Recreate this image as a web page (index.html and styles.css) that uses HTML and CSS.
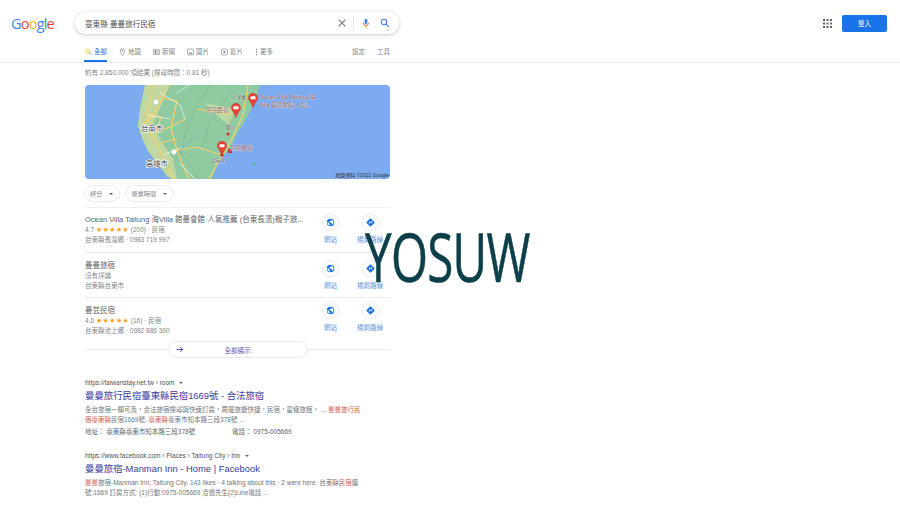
FILE: index.html
```html
<!DOCTYPE html>
<html lang="zh-Hant">
<head>
    <meta charset="UTF-8">
    <title>臺東縣 曼曼旅行民宿 - Google 搜尋</title>
    <link rel="stylesheet" href="styles.css">
</head>
<body>
    <svg class="defs" width="0" height="0">
        <symbol id="globe" viewBox="0 0 24 24"><path fill="#1a73e8" d="M12 2a10 10 0 1 0 0 20 10 10 0 0 0 0-20zM4 12c0-.6.1-1.200.2-1.800L9 15v1c0 1.100.9 2 2 2v2a8 8 0 0 1-7-8zm13.900 5.400c-.3-.8-1-1.400-1.900-1.400h-1v-3c0-.6-.4-1-1-1H8v-2h2c.6 0 1-.4 1-1V7h2c1.100 0 2-.9 2-2v-.4a8 8 0 0 1 2.900 12.800z"/></symbol>
        <symbol id="route" viewBox="0 0 24 24"><path fill="#1a73e8" d="M22.400 10.900 13.100 1.600a1.500 1.500 0 0 0-2.200 0l-9.300 9.300a1.500 1.500 0 0 0 0 2.200l9.300 9.300c.6.600 1.600.6 2.200 0l9.300-9.300c.6-.6.600-1.600 0-2.200z"/><path fill="#fff" d="M13.500 7.500V10H9c-.6 0-1 .4-1 1v4h2v-3h3.500v2.500L17 11z"/></symbol>
        <symbol id="pin" viewBox="0 0 16 24"><path fill="#ea4335" stroke="#b3261e" stroke-width=".6" d="M8 .5C3.900.5.700 3.700.700 7.700c0 5.300 5.400 7.700 7.300 15.800 1.900-8.100 7.300-10.500 7.300-15.800C15.300 3.700 12.100.5 8 .5z"/><rect x="4" y="5" width="8" height="5" rx="1" fill="#fff"/></symbol>
    </svg>

    <header class="topbar">
        <div class="logo"><span class="g-blue">G</span><span class="g-red">o</span><span class="g-yellow">o</span><span class="g-blue">g</span><span class="g-green">l</span><span class="g-red">e</span></div>
        <div class="searchbox">
            <span class="query">臺東縣 曼曼旅行民宿</span>
            <svg class="clear" viewBox="0 0 12 12"><path d="M2 2l8 8M10 2l-8 8" stroke="#70757a" stroke-width="1.300"/></svg>
            <span class="sep"></span>
            <svg class="mic" viewBox="0 0 12 16"><rect x="4" y="1" width="4" height="8" rx="2" fill="#4285f4"/><path d="M2 7c0 2.500 1.800 4 4 4s4-1.500 4-4" fill="none" stroke="#ea4335" stroke-width="1.300"/><path d="M6 11v4" stroke="#fbbc04" stroke-width="1.400"/></svg>
            <svg class="glass" viewBox="0 0 14 14"><circle cx="5.500" cy="5.500" r="3.800" fill="none" stroke="#4285f4" stroke-width="1.500"/><path d="M8.500 8.500l4 4" stroke="#4285f4" stroke-width="1.700"/></svg>
        </div>
        <div class="top-right">
            <svg class="apps" viewBox="0 0 9 9"><g fill="#5f6368"><rect width="2" height="2"/><rect x="3.500" width="2" height="2"/><rect x="7" width="2" height="2"/><rect y="3.500" width="2" height="2"/><rect x="3.500" y="3.500" width="2" height="2"/><rect x="7" y="3.500" width="2" height="2"/><rect y="7" width="2" height="2"/><rect x="3.500" y="7" width="2" height="2"/><rect x="7" y="7" width="2" height="2"/></g></svg>
            <button class="signin">登入</button>
        </div>
    </header>

    <nav class="tabs">
        <a class="tab active"><svg viewBox="0 0 14 14"><circle cx="5.500" cy="5.500" r="3.800" fill="none" stroke="#fbbc04" stroke-width="1.500"/><path d="M8.500 8.500l4 4" stroke="#4285f4" stroke-width="1.700"/></svg>全部</a>
        <a class="tab"><svg viewBox="0 0 12 14"><path d="M6 1a4 4 0 0 0-4 4c0 3 4 8 4 8s4-5 4-8a4 4 0 0 0-4-4z" fill="none" stroke="#70757a"/><circle cx="6" cy="5" r="1.300" fill="#70757a"/></svg>地圖</a>
        <a class="tab"><svg viewBox="0 0 14 12"><rect x="1" y="1" width="12" height="10" rx="1" fill="none" stroke="#70757a"/><rect x="3" y="3" width="4" height="4" fill="#70757a"/><path d="M8.500 3.500h3M8.500 6h3M3 9h8.500" stroke="#70757a"/></svg>新聞</a>
        <a class="tab"><svg viewBox="0 0 12 12"><rect x="1" y="1" width="10" height="10" rx="1" fill="none" stroke="#70757a"/><path d="M3 9l2-3 1.500 2L8 6.500 9.500 9z" fill="#70757a"/></svg>圖片</a>
        <a class="tab"><svg viewBox="0 0 12 12"><rect x="1" y="1" width="10" height="10" rx="1" fill="none" stroke="#70757a"/><path d="M4.500 3.500v5L8.500 6z" fill="#70757a"/></svg>影片</a>
        <a class="tab more"><svg viewBox="0 0 4 12"><g fill="#70757a"><circle cx="2" cy="2" r="1"/><circle cx="2" cy="6" r="1"/><circle cx="2" cy="10" r="1"/></g></svg>更多</a>
        <span class="tabs-right"><a class="tab">設定</a><a class="tab">工具</a></span>
    </nav>

    <main class="results">
        <p class="stats">約有 2,850,000 項結果 (搜尋時間：0.81 秒)</p>

        <div class="map">
            <svg viewBox="0 0 305 94" width="305" height="94">
                <rect width="305" height="94" fill="#7dabf0"/>
                <path fill="#8fcaa0" d="M60 0L55 24 53 41 58 55 63 66 75 82 82 91 87 94H127L135 74 145 64 152 49 160 36 170 16 175 0z"/>
                <path fill="#c2d8a2" d="M60 0L55 24 53 41 58 55 63 66 75 82 82 91 87 94H92L88 74 76 56 68 40 76 20 84 0z"/>
                <path fill="#b8d8a6" d="M120 18L150 24 144 40 136 34z"/>
                <path fill="none" stroke="#f6d06c" stroke-width="1.200" d="M68 0L63 26 66 48 78 72 88 94M84 0L74 22 58 40M66 48L86 42 92 66 104 94M86 42L100 34M112 24L148 30M163 0L158 30 146 56 134 76 124 94M90 66L112 62 136 70M72 12L92 16 86 42M58 28L76 32 70 52M76 58L92 54"/>
                <path fill="none" stroke="#fff" stroke-width=".6" d="M75 8L95 20 100 34M62 30L85 34M78 70L98 62M94 78L110 94M92 8L104 0"/>
                <path fill="none" stroke="#6f9480" stroke-width=".5" stroke-dasharray="2 1.500" d="M125 0L110 24 100 50 96 68 114 94M145 8L124 38 118 62M96 68L76 90"/>
                <path fill="none" stroke="#6f9fc8" stroke-width=".6" d="M112 50L92 68"/>
                <path fill="#5fb7a5" d="M168 77l3 1 0 3-3-1z"/>
                <circle cx="71" cy="17" r="2.400" fill="#fff"/>
                <circle cx="89" cy="67" r="2.400" fill="#fff"/>
                <rect x="143" y="64" width="4" height="4" fill="#c5322a"/>
                <circle cx="143" cy="49" r="1.600" fill="#d93025"/>
                <circle cx="137" cy="70" r="1.800" fill="#d93025"/>
                <text class="city" x="56" y="46">台南市</text>
                <text class="city" x="61" y="81">高雄市</text>
                <text class="lbl" x="174" y="14">Ocean Villa Taitung 海</text>
                <text class="lbl" x="174" y="22">Villa 館曼會館 人氣...</text>
                <text class="lbl" x="121" y="27">曼曼民宿</text>
                <text class="lbl" x="145" y="65">曼曼旅宿</text>
                <text class="tiny" x="161" y="14" text-anchor="end">上里鄉</text>
                <text class="tiny" x="150" y="44" text-anchor="end">關山</text>
                <text class="tiny" x="140" y="77" text-anchor="end">太麻里</text>
                <use href="#pin" x="163" y="8" width="10" height="15"/>
                <use href="#pin" x="146" y="18" width="10" height="15"/>
                <use href="#pin" x="132" y="56" width="10" height="15"/>
                <text class="credit" x="304" y="92" text-anchor="end">地圖資料 ©2021 Google</text>
            </svg>
        </div>

        <div class="chips">
            <button class="chip">評分<i class="caret"></i></button>
            <button class="chip">營業時間<i class="caret"></i></button>
        </div>

        <div class="places">
            <div class="place">
                <div class="place-info">
                    <div class="place-name">Ocean Villa Taitung 海Villa 館曼會館·人氣推薦 (台東長濱)親子旅...</div>
                    <div class="place-line">4.7 <span class="stars">★★★★★</span> (200) · 民宿</div>
                    <div class="place-line">台東縣長濱鄉 · 0983 719 997</div>
                </div>
                <div class="action"><span class="circle"><svg><use href="#globe"/></svg></span>網站</div>
                <div class="action"><span class="circle"><svg><use href="#route"/></svg></span>規劃路線</div>
            </div>
            <div class="place">
                <div class="place-info">
                    <div class="place-name">曼曼旅宿</div>
                    <div class="place-line">沒有評論</div>
                    <div class="place-line">台東縣台東市</div>
                </div>
                <div class="action"><span class="circle"><svg><use href="#globe"/></svg></span>網站</div>
                <div class="action"><span class="circle"><svg><use href="#route"/></svg></span>規劃路線</div>
            </div>
            <div class="place">
                <div class="place-info">
                    <div class="place-name">曼芸民宿</div>
                    <div class="place-line">4.6 <span class="stars">★★★★★</span> (16) · 民宿</div>
                    <div class="place-line">台東縣池上鄉 · 0982 886 390</div>
                </div>
                <div class="action"><span class="circle"><svg><use href="#globe"/></svg></span>網站</div>
                <div class="action"><span class="circle"><svg><use href="#route"/></svg></span>規劃路線</div>
            </div>
        </div>

        <div class="all-places">
            <button class="all-btn">
                <svg viewBox="0 0 12 10"><path d="M1 5h9M6.500 1.500L10 5 6.500 8.500" fill="none" stroke="#3c2f9e" stroke-width="1.300"/></svg>
                <span>全部顯示</span>
            </button>
        </div>

        <article class="result first">
            <div class="url">https://taiwanstay.net.tw › room <i class="caret"></i></div>
            <h3 class="title">曼曼旅行民宿臺東縣民宿1669號 - 合法旅宿</h3>
            <p class="snippet">全台旅宿一欄可及，合法旅宿搜尋與快速訂房，周邊旅遊快捷，民宿，星級旅館， ... <em>曼曼旅行民宿臺東縣</em>民宿1669號. <em>臺東縣</em>臺東市知本路三段378號 ...</p>
            <p class="attrs"><span class="attr-a">地址： 臺東縣臺東市知本路三段378號</span><span>電話： 0975-005669</span></p>
        </article>

        <article class="result">
            <div class="url">https://www.facebook.com › Places › Taitung City › Inn <i class="caret"></i></div>
            <h3 class="title">曼曼旅宿-Manman Inn - Home | Facebook</h3>
            <p class="snippet"><em>曼曼</em>旅宿-Manman Inn, Taitung City. 143 likes · 4 talking about this · 2 were here. 台東縣<em>民宿</em>連號:1669 訂房方式: (1)行動:0975-005669 洽翁先生(2)Line電話 ...</p>
        </article>
    </main>

    <div class="watermark">YOSUW</div>
</body>
</html>
```

FILE: styles.css
```css
* {
    box-sizing: border-box;
}
body {
    margin: 0;
    height: 506px;
    overflow: hidden;
    position: relative;
    background: #fff;
    color: #5f6368;
    font-family: "Liberation Sans", "Noto Sans CJK TC", sans-serif;
    font-size: 6.500px;
}
p, h3 {
    margin: 0;
}
.defs {
    position: absolute;
}

/* top bar */
.topbar {
    display: flex;
    align-items: center;
    height: 46px;
    padding: 0 13px 0 11px;
}
.logo {
    width: 64px;
    font-family: "Open Sans", sans-serif;
    font-size: 14.500px;
    letter-spacing: -0.8px;
}
.g-blue { color: #4285f4; }
.g-red { color: #ea4335; }
.g-yellow { color: #fbbc05; }
.g-green { color: #34a853; }
.searchbox {
    display: flex;
    align-items: center;
    width: 324px;
    height: 22px;
    padding: 0 9px 0 10px;
    border-radius: 11px;
    background: #fff;
    box-shadow: 0 1px 4px rgba(32, 33, 36, 0.24);
}
.query {
    flex: 1;
    font-size: 7.600px;
    color: #4d5156;
}
.clear {
    width: 10px;
    height: 10px;
}
.sep {
    width: 1px;
    height: 14px;
    margin: 0 8px 0 6px;
    background: #e4e6e9;
}
.mic {
    width: 8px;
    height: 11px;
    margin-right: 10px;
}
.glass {
    width: 10px;
    height: 10px;
}
.top-right {
    display: flex;
    align-items: center;
    margin-left: auto;
}
.apps {
    width: 9px;
    height: 9px;
    margin-right: 10px;
}
.signin {
    width: 45px;
    height: 17px;
    padding: 0;
    border: 0;
    border-radius: 2px;
    background: #1a73e8;
    color: #fff;
    font-family: inherit;
    font-size: 6.500px;
}

/* tabs */
.tabs {
    display: flex;
    gap: 12px;
    height: 17px;
    padding-left: 84px;
    border-bottom: 1px solid #ebebeb;
    color: #80868b;
}
.tab {
    display: flex;
    align-items: flex-start;
    gap: 2px;
    padding-top: 1px;
    line-height: 10px;
    white-space: nowrap;
}
.tab svg {
    width: 7px;
    height: 8px;
    margin-top: 1px;
}
.tab.active {
    width: 23px;
    height: 16px;
    padding-left: 1px;
    color: #1a73e8;
    border-bottom: 2px solid #1a73e8;
}
.tab.more svg {
    width: 3px;
}
.tabs-right {
    display: flex;
    gap: 12px;
    margin-left: 67px;
}

/* results column */
.results {
    width: 305px;
    margin-left: 85px;
}
.stats {
    height: 22px;
    padding-top: 5px;
    line-height: 9px;
    color: #80868b;
}
.map {
    height: 94px;
    border-radius: 4px;
    overflow: hidden;
}
.map svg {
    display: block;
}
.city {
    font-size: 7.300px;
    fill: #444a50;
    stroke: #fff;
    stroke-width: 1.200px;
    paint-order: stroke;
}
.lbl {
    font-size: 5.700px;
    fill: #96534a;
    stroke: rgba(255, 255, 255, 0.6);
    stroke-width: .5px;
    paint-order: stroke;
}
.tiny {
    font-size: 4.500px;
    fill: #555;
    stroke: rgba(255, 255, 255, 0.6);
    stroke-width: .5px;
    paint-order: stroke;
}
.credit {
    font-size: 5px;
    fill: #333;
}
.chips {
    display: flex;
    gap: 5px;
    margin: 6px 0 5px -1px;
}
.chip {
    display: flex;
    align-items: center;
    gap: 7px;
    height: 17px;
    padding: 0 6px 0 5px;
    border: 1px solid #eaecee;
    border-radius: 9px;
    background: #fff;
    color: #80868b;
    font-family: inherit;
    font-size: 6.200px;
}
.caret {
    display: inline-block;
    width: 0;
    height: 0;
    border: 2px solid transparent;
    border-top: 2.500px solid #5f6368;
    border-bottom: 0;
    vertical-align: middle;
}

/* local listing */
.places {
    border-top: 1px solid #f1f1f1;
}
.place {
    display: flex;
    height: 45px;
    padding-top: 7px;
    border-bottom: 1px solid #ebebeb;
}
.place:first-child {
    padding-top: 6px;
}
.place:last-child {
    height: 44px;
    border-bottom: 0;
}
.place-info {
    flex: 1;
    min-width: 0;
}
.place-name {
    font-size: 7.500px;
    line-height: 11px;
    color: #5f6368;
    white-space: nowrap;
}
.place-line {
    line-height: 10px;
    color: #80868b;
}
.stars {
    color: #f5a623;
    font-family: "DejaVu Sans", sans-serif;
    font-size: 7.400px;
}
.action {
    display: flex;
    flex-direction: column;
    align-items: center;
    width: 39px;
    color: #5b93e0;
    line-height: 10px;
}
.action:last-child {
    width: 40px;
}
.place:last-child .action {
    margin-top: -3px;
}
.circle {
    display: flex;
    align-items: center;
    justify-content: center;
    width: 17px;
    height: 17px;
    margin-bottom: 4px;
    border: 1px solid #eceef0;
    border-radius: 50%;
    box-shadow: 0 0 2px rgba(0, 0, 0, 0.08);
}
.circle svg {
    width: 9px;
    height: 9px;
}
.all-places {
    display: flex;
    justify-content: center;
    height: 17px;
    margin-top: -1px;
    background: linear-gradient(#ebebeb, #ebebeb) center / 100% 1px no-repeat;
}
.all-btn {
    display: flex;
    align-items: center;
    width: 140px;
    height: 17px;
    padding: 0 0 0 7px;
    border: 1px solid #e9ebed;
    border-radius: 9px;
    background: #fff;
    color: #5a55a8;
    font-family: inherit;
    font-size: 6.500px;
}
.all-btn svg {
    width: 8px;
    height: 7px;
}
.all-btn span {
    flex: 1;
    padding-right: 15px;
    text-align: center;
}

/* organic results */
.result {
    margin-top: 14px;
}
.result.first {
    margin-top: 20px;
}
.url {
    line-height: 10px;
    color: #4d5156;
}
.url .caret {
    margin-left: 3px;
}
.title {
    margin-top: 1px;
    font-size: 9.400px;
    font-weight: normal;
    line-height: 13px;
    color: #3a3a9e;
    white-space: nowrap;
}
.snippet {
    width: 280px;
    margin-top: 3px;
    line-height: 10px;
    color: #70757a;
}
.snippet em {
    font-style: normal;
    color: #d0584a;
}
.attrs {
    display: flex;
    margin-top: 2px;
    line-height: 10px;
}
.attr-a {
    width: 147px;
}

/* site watermark laid over the capture */
.watermark {
    position: absolute;
    left: 365px;
    top: 217px;
    font-family: "Open Sans", sans-serif;
    font-size: 67px;
    line-height: 78px;
    letter-spacing: -1px;
    color: #0d3f4a;
    -webkit-text-stroke: 0.6px #0d3f4a;
    transform: scaleX(.71);
    transform-origin: left top;
}
```
